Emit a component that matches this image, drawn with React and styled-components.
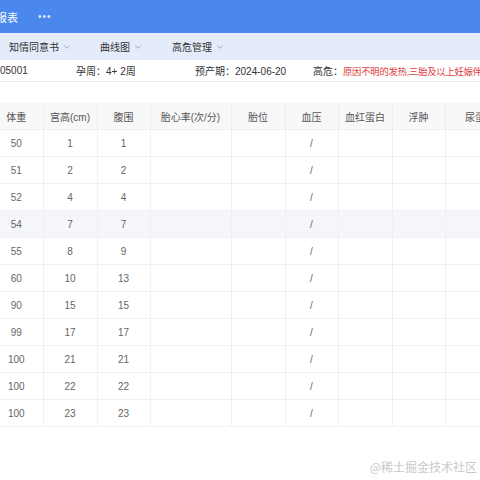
import React from "react";
import styled, { createGlobalStyle } from "styled-components";
import { ChevronDown } from "lucide-react";

const GlobalStyle = createGlobalStyle`
  html, body {
    margin: 0;
    padding: 0;
    background: #fff;
    font-family: "Liberation Sans", "Noto Sans CJK SC", sans-serif;
    overflow: hidden;
  }
`;

const Page = styled.div`
  position: relative;
  width: 480px;
  height: 480px;
  overflow: hidden;
  background: #fff;
`;

const TopBar = styled.div`
  height: 33px;
  background: #4a88ee;
  display: flex;
  align-items: center;
  gap: 20px;
  color: #fff;
`;

const Title = styled.span`
  margin-left: -4px;
  font-size: 11px;
`;

const Dots = styled.span`
  font-size: 10px;
  letter-spacing: 1px;
  color: rgba(255, 255, 255, 0.85);
`;

const NavStrip = styled.div`
  height: 27px;
  background: #e4ecfb;
  display: flex;
  align-items: center;
  padding-left: 9px;
`;

const NavItem = styled.div`
  display: flex;
  align-items: center;
  gap: 3px;
  width: ${(p) => p.$w}px;
  font-size: 10px;
  color: #333;
  svg {
    color: #777;
  }
`;

const InfoRow = styled.div`
  height: 21px;
  display: flex;
  align-items: center;
  border-bottom: 1px solid #ebebeb;
  font-size: 10px;
  color: #333;
  white-space: nowrap;
  overflow: hidden;
`;

const InfoCell = styled.span`
  width: ${(p) => p.$w}px;
  flex: none;
`;

const Danger = styled.span`
  color: #e03c3c;
  font-size: 9.3px;
  letter-spacing: -0.2px;
`;

const TableWrap = styled.div`
  margin-top: 21px;
  margin-left: -10px;
`;

const Table = styled.table`
  border-collapse: collapse;
  table-layout: fixed;
  width: ${(p) => p.$w}px;
  font-size: 10px;
`;

const Th = styled.th`
  height: 26px;
  background: #f8f8f9;
  color: #555;
  font-weight: normal;
  border-right: 1px solid #eceef2;
  border-bottom: 1px solid #eceef2;
  text-align: center;
  white-space: nowrap;
  overflow: hidden;
  padding: 0;
`;

const Tr = styled.tr`
  background: ${(p) => (p.$hover ? "#f4f6fa" : "#fff")};
`;

const Td = styled.td`
  height: 26px;
  color: #666;
  border-right: 1px solid #eef0f3;
  border-bottom: 1px solid #eef0f3;
  text-align: center;
  padding: 0;
`;

const Watermark = styled.div`
  position: absolute;
  right: 3px;
  bottom: 5px;
  font-size: 12px;
  color: #c9c9c9;
  font-family: "Noto Sans CJK SC", sans-serif;
`;

const columns = [
  { label: "体重", w: 53 },
  { label: "宫高(cm)", w: 54 },
  { label: "腹围", w: 53 },
  { label: "胎心率(次/分)", w: 81 },
  { label: "胎位", w: 54 },
  { label: "血压", w: 53 },
  { label: "血红蛋白", w: 54 },
  { label: "浮肿", w: 53 },
  { label: "尿蛋白", w: 70 },
];

const tableWidth = columns.reduce((s, c) => s + c.w, 0);

const rows = [
  [50, 1, 1],
  [51, 2, 2],
  [52, 4, 4],
  [54, 7, 7],
  [55, 8, 9],
  [60, 10, 13],
  [90, 15, 15],
  [99, 17, 17],
  [100, 21, 21],
  [100, 22, 22],
  [100, 23, 23],
];

const App = () => {
  return (
    <Page>
      <GlobalStyle />
      <TopBar>
        <Title>报表</Title>
        <Dots>•••</Dots>
      </TopBar>
      <NavStrip>
        <NavItem $w={91}>
          知情同意书 <ChevronDown size={10} strokeWidth={1.5} />
        </NavItem>
        <NavItem $w={72}>
          曲线图 <ChevronDown size={10} strokeWidth={1.5} />
        </NavItem>
        <NavItem $w={80}>
          高危管理 <ChevronDown size={10} strokeWidth={1.5} />
        </NavItem>
      </NavStrip>
      <InfoRow>
        <InfoCell $w={76}>05001</InfoCell>
        <InfoCell $w={119}>孕周：4+ 2周</InfoCell>
        <InfoCell $w={118}>预产期：2024-06-20</InfoCell>
        <InfoCell $w={200}>
          高危：<Danger>原因不明的发热,三胎及以上妊娠伴发</Danger>
        </InfoCell>
      </InfoRow>
      <TableWrap>
        <Table $w={tableWidth}>
          <colgroup>
            {columns.map((c) => (
              <col key={c.label} style={{ width: c.w }} />
            ))}
          </colgroup>
          <thead>
            <tr>
              {columns.map((c) => (
                <Th key={c.label}>{c.label}</Th>
              ))}
            </tr>
          </thead>
          <tbody>
            {rows.map((r, i) => (
              <Tr key={i} $hover={i === 3}>
                <Td>{r[0]}</Td>
                <Td>{r[1]}</Td>
                <Td>{r[2]}</Td>
                <Td />
                <Td />
                <Td>/</Td>
                <Td />
                <Td />
                <Td />
              </Tr>
            ))}
          </tbody>
        </Table>
      </TableWrap>
      <Watermark>@稀土掘金技术社区</Watermark>
    </Page>
  );
};

export default App;
